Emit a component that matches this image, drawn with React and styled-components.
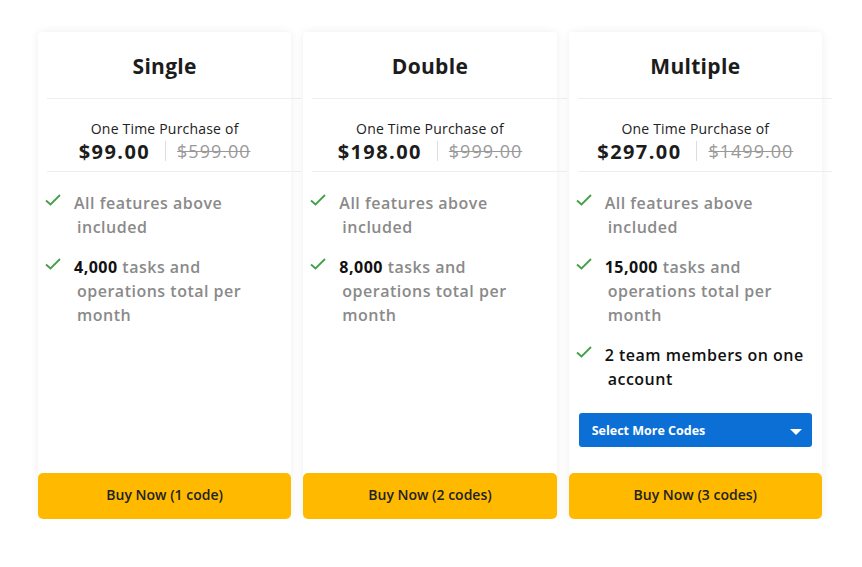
import styled, { createGlobalStyle } from "styled-components";

const GlobalStyle = createGlobalStyle`
  body {
    margin: 0;
    background: #ffffff;
    font-family: "Open Sans", "Liberation Sans", sans-serif;
  }
`;

const plans = [
  {
    name: "Single",
    price: "$99.00",
    oldPrice: "$599.00",
    tasks: "4,000",
    button: "Buy Now (1 code)",
  },
  {
    name: "Double",
    price: "$198.00",
    oldPrice: "$999.00",
    tasks: "8,000",
    button: "Buy Now (2 codes)",
  },
  {
    name: "Multiple",
    price: "$297.00",
    oldPrice: "$1499.00",
    tasks: "15,000",
    button: "Buy Now (3 codes)",
    team: true,
  },
];

const Check = () => (
  <CheckIcon viewBox="0 0 16 12" width="16" height="12">
    <path d="M1 6.5 L5.5 10.5 L15 1" fill="none" stroke="#43a047" strokeWidth="1.8" />
  </CheckIcon>
);

const App = () => {
  return (
    <>
      <GlobalStyle />
      <Page>
        {plans.map((p) => (
          <Card key={p.name}>
            <Header>{p.name}</Header>
            <PriceBlock>
              <PriceLabel>One Time Purchase of</PriceLabel>
              <PriceRow>
                <Price>{p.price}</Price>
                <Sep />
                <OldPrice>{p.oldPrice}</OldPrice>
              </PriceRow>
            </PriceBlock>
            <Features>
              <Feature>
                <Check />
                <FeatureText>All features above included</FeatureText>
              </Feature>
              <Feature>
                <Check />
                <FeatureText>
                  <b>{p.tasks}</b> tasks and operations total per month
                </FeatureText>
              </Feature>
              {p.team && (
                <Feature>
                  <Check />
                  <FeatureText $dark>2 team members on one account</FeatureText>
                </Feature>
              )}
            </Features>
            {p.team && (
              <Select>
                Select More Codes
                <Caret />
              </Select>
            )}
            <Spacer />
            <BuyButton>{p.button}</BuyButton>
          </Card>
        ))}
      </Page>
    </>
  );
};

const Page = styled.div`
  display: flex;
  gap: 12px;
  width: 784px;
  padding: 32px 0 0 38px;
`;

const Card = styled.div`
  flex: 1;
  height: 487px;
  display: flex;
  flex-direction: column;
  background: #fff;
  border-radius: 4px;
  box-shadow: 0 0 10px rgba(0, 0, 0, 0.07);
`;

const Header = styled.div`
  height: 67px;
  margin: 0 -10px 0 9px;
  padding: 1px 19px 0 0;
  display: flex;
  align-items: center;
  justify-content: center;
  box-sizing: border-box;
  border-bottom: 1px solid #eeeeee;
  font-size: 21px;
  letter-spacing: 0.3px;
  font-weight: 700;
  color: #1c1c1c;
`;

const PriceBlock = styled.div`
  margin: 0 -10px 0 9px;
  padding: 20px 19px 8px 0;
  border-bottom: 1px solid #eeeeee;
  display: flex;
  flex-direction: column;
  align-items: center;
`;

const PriceLabel = styled.div`
  font-size: 14px;
  letter-spacing: 0.2px;
  line-height: 20px;
  color: #222;
`;

const PriceRow = styled.div`
  display: flex;
  align-items: center;
  height: 24px;
`;

const Price = styled.span`
  font-size: 20px;
  letter-spacing: 1.4px;
  font-weight: 700;
  color: #1c1c1c;
`;

const Sep = styled.span`
  width: 1px;
  height: 20px;
  background: #dddddd;
  margin: 0 11px 0 15px;
`;

const OldPrice = styled.span`
  font-size: 18px;
  letter-spacing: 1px;
  color: #999;
  text-decoration: line-through;
`;

const Features = styled.div`
  display: flex;
  flex-direction: column;
  gap: 16px;
  padding: 19px 0 0 7px;
`;

const Feature = styled.div`
  display: flex;
  align-items: flex-start;
`;

const CheckIcon = styled.svg`
  flex: none;
  margin-top: 3px;
  margin-right: 13px;
`;

const FeatureText = styled.div`
  width: 200px;
  padding-left: 3px;
  text-indent: -3px;
  font-size: 16px;
  letter-spacing: 0.5px;
  line-height: 24px;
  font-weight: 600;
  color: ${(p) => (p.$dark ? "#111" : "#8a8a8a")};

  b {
    color: #111;
    font-weight: 700;
  }
`;

const Select = styled.div`
  margin: 22px 10px 0;
  height: 34px;
  border-radius: 3px;
  background: #0b6fd6;
  color: #fff;
  font-size: 12.5px;
  font-weight: 700;
  display: flex;
  align-items: center;
  justify-content: space-between;
  padding: 0 10px 0 13px;
`;

const Caret = styled.span`
  width: 0;
  height: 0;
  margin-top: 3px;
  border-left: 6px solid transparent;
  border-right: 6px solid transparent;
  border-top: 6px solid #fff;
`;

const Spacer = styled.div`
  flex: 1;
`;

const BuyButton = styled.button`
  height: 46px;
  padding: 0 0 3px;
  border: none;
  border-radius: 5px;
  background: #ffba00;
  color: #222;
  font-family: inherit;
  font-size: 14px;
  font-weight: 600;
  cursor: pointer;
`;

export default App;
